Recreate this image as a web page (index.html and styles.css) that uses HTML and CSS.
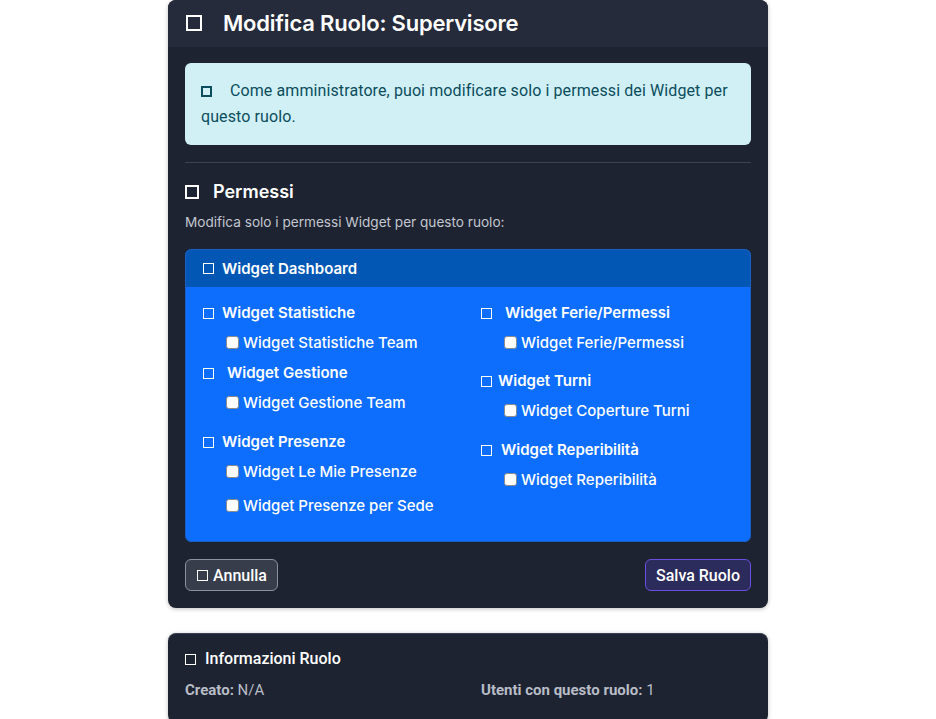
FILE: index.html
```html
<!DOCTYPE html>
<html lang="it">
<head>
<meta charset="utf-8">
<title>Modifica Ruolo</title>
<link rel="stylesheet" href="styles.css">
</head>
<body>
<main class="page">
  <section class="card">
    <header class="card-header">
      <span class="sq sq-title"></span>
      <h1 class="title">Modifica Ruolo: Supervisore</h1>
    </header>
    <div class="card-body">
      <div class="alert">
        <span class="sq sq-alert"></span>Come amministratore, puoi modificare solo i permessi dei Widget per questo ruolo.
      </div>
      <hr class="divider">
      <h2 class="section-title"><span class="sq sq-section"></span>Permessi</h2>
      <p class="hint">Modifica solo i permessi Widget per questo ruolo:</p>

      <div class="panel">
        <div class="panel-header"><span class="sq sq-small"></span>Widget Dashboard</div>
        <div class="panel-body">
          <div class="col">
            <div class="group group-tight">
              <div class="group-title"><span class="sq sq-small"></span>Widget Statistiche</div>
              <label class="item"><input type="checkbox" class="cb">Widget Statistiche Team</label>
            </div>
            <div class="group">
              <div class="group-title"><span class="sq sq-small"></span><span class="sp">Widget Gestione</span></div>
              <label class="item"><input type="checkbox" class="cb">Widget Gestione Team</label>
            </div>
            <div class="group">
              <div class="group-title"><span class="sq sq-small"></span>Widget Presenze</div>
              <label class="item"><input type="checkbox" class="cb">Widget Le Mie Presenze</label>
              <label class="item"><input type="checkbox" class="cb">Widget Presenze per Sede</label>
            </div>
          </div>
          <div class="col">
            <div class="group group-mid">
              <div class="group-title"><span class="sq sq-small"></span><span class="sp">Widget Ferie/Permessi</span></div>
              <label class="item"><input type="checkbox" class="cb">Widget Ferie/Permessi</label>
            </div>
            <div class="group">
              <div class="group-title"><span class="sq sq-small sq-near"></span>Widget Turni</div>
              <label class="item"><input type="checkbox" class="cb">Widget Coperture Turni</label>
            </div>
            <div class="group">
              <div class="group-title"><span class="sq sq-small sq-mid"></span>Widget Reperibilità</div>
              <label class="item"><input type="checkbox" class="cb">Widget Reperibilità</label>
            </div>
          </div>
        </div>
      </div>

      <div class="actions">
        <button class="btn btn-cancel" type="button"><span class="sq sq-btn"></span>Annulla</button>
        <button class="btn btn-save" type="button">Salva Ruolo</button>
      </div>
    </div>
  </section>

  <section class="card card-info">
    <h3 class="info-title"><span class="sq sq-info"></span>Informazioni Ruolo</h3>
    <div class="info-grid">
      <div class="info-cell"><strong>Creato:</strong> N/A</div>
      <div class="info-cell"><strong>Utenti con questo ruolo:</strong> 1</div>
    </div>
  </section>
</main>
</body>
</html>
```

FILE: styles.css
```css
* { box-sizing: border-box; }

html, body {
  margin: 0;
  padding: 0;
  background: #ffffff;
}

body {
  font-family: Inter, "Noto Sans", "DejaVu Sans", sans-serif;
  color: #ffffff;
}

.page {
  width: 600px;
  margin: 0 auto;
  display: flex;
  flex-direction: column;
  gap: 25px;
}

.card {
  background: #1e2332;
  border-radius: 8px;
  box-shadow: 0 1px 4px rgba(0, 0, 0, 0.25);
  overflow: hidden;
}

/* generic hollow square icon */
.sq {
  display: inline-block;
  border: 2px solid #ffffff;
  flex: none;
}

.card-header {
  height: 47px;
  background: #262b3b;
  display: flex;
  align-items: center;
  padding: 0 18px;
  padding-bottom: 1px;
}

.sq-title {
  width: 16px;
  height: 16px;
  margin-right: 21px;
}

.title {
  margin: 0;
  font-size: 22px;
  font-weight: 600;
  letter-spacing: -0.2px;
  line-height: 30px;
}

.card-body {
  padding: 16px 17px 17px;
}

.alert {
  background: #d1f0f6;
  color: #0b4d5c;
  border-radius: 6px;
  padding: 15px 16px 15px 16px;
  font-family: Roboto, "Liberation Sans", sans-serif;
  font-size: 16px;
  letter-spacing: 0.1px;
  line-height: 26px;
  height: 82px;
}

.sq-alert {
  width: 11px;
  height: 11px;
  border-color: #0b4d5c;
  margin-right: 18px;
  vertical-align: -0.5px;
}

.divider {
  border: 0;
  border-top: 1px solid #3d4353;
  margin: 17px 0 0;
}

.section-title {
  margin: 17px 0 0;
  display: flex;
  align-items: center;
  font-size: 18px;
  font-weight: 600;
  line-height: 24px;
}

.sq-section {
  width: 14px;
  height: 14px;
  margin-right: 14px;
}

.hint {
  margin: 8px 0 0;
  font-size: 13.6px;
  line-height: 20px;
  color: #c3c7cf;
}

.panel {
  margin-top: 17px;
  background: #0d6efd;
  border: 1px solid #1a5fc4;
  border-radius: 6px;
  overflow: hidden;
}

.panel-header {
  background: #0257b4;
  height: 37px;
  display: flex;
  align-items: center;
  padding: 0 17px 1px;
  font-size: 15px;
  font-weight: 600;
}

.sq-small {
  width: 11px;
  height: 11px;
  border-width: 1.5px;
  margin-right: 8px;
}

.panel-body {
  display: grid;
  grid-template-columns: 278px 1fr;
  padding: 15px 17px 7px;
}

.group {
  margin-bottom: 17px;
}

.group-tight { margin-bottom: 8px; }
.group-mid { margin-bottom: 16px; }

.group-title {
  display: flex;
  align-items: center;
  font-size: 15px;
  font-weight: 600;
  line-height: 22px;
  margin-bottom: 8px;
}

.sp { margin-left: 5px; }
.sq-near { margin-right: 6px; }
.sq-mid { margin-right: 9px; }

.item {
  display: flex;
  align-items: center;
  font-size: 15px;
  font-weight: 500;
  line-height: 22px;
  margin: 0 0 12px 23px;
}

.item:last-child { margin-bottom: 0; }

.cb {
  appearance: none;
  -webkit-appearance: none;
  width: 13px;
  height: 13px;
  margin: 0 4px 0 0;
  flex: none;
  background: #ffffff;
  border: 1px solid #8d8d8d;
  border-radius: 3px;
  position: relative;
  top: -1px;
}

.actions {
  display: flex;
  justify-content: space-between;
  margin-top: 17px;
}

.btn {
  height: 32px;
  border-radius: 6px;
  font-family: Roboto, "Liberation Sans", sans-serif;
  font-size: 16px;
  font-weight: 500;
  color: #ffffff;
  display: inline-flex;
  align-items: center;
  padding: 0 10px;
  cursor: pointer;
}

.btn-cancel {
  background: #373d4b;
  border: 1px solid #8c919b;
  padding-left: 11px;
}

.sq-btn {
  width: 11px;
  height: 11px;
  border-width: 1.5px;
  margin-right: 5px;
}

.btn-save {
  background: #2b2b5c;
  border: 1px solid #6b4fe0;
}

.card-info {
  padding: 15px 17px 20px;
  border-top: 1px solid #3a4050;
  height: 90px;
}

.info-title {
  margin: 0;
  display: flex;
  align-items: center;
  font-family: Roboto, "Liberation Sans", sans-serif;
  font-size: 16px;
  font-weight: 500;
  line-height: 20px;
}

.sq-info {
  width: 11px;
  height: 11px;
  border-width: 1.5px;
  margin-right: 9px;
}

.info-grid {
  display: grid;
  grid-template-columns: 296px 1fr;
  margin-top: 11px;
  font-family: Roboto, "Liberation Sans", sans-serif;
  font-size: 15px;
  line-height: 20px;
  color: #b8bdc6;
}

.info-cell strong {
  font-weight: 700;
}
```
